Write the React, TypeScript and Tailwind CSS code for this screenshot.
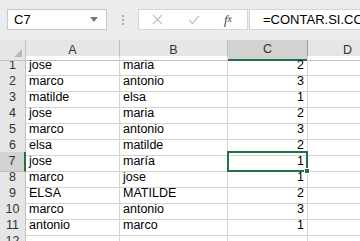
import React from "react";

const rows: [string, string, number][] = [
  ["jose", "maria", 2],
  ["marco", "antonio", 3],
  ["matilde", "elsa", 1],
  ["jose", "maria", 2],
  ["marco", "antonio", 3],
  ["elsa", "matilde", 2],
  ["jose", "maría", 1],
  ["marco", "jose", 1],
  ["ELSA", "MATILDE", 2],
  ["marco", "antonio", 3],
  ["antonio", "marco", 1],
  ["", "", 0],
];

const cols = "grid-cols-[26px_94px_108px_80px_80px]";

export default function App() {
  return (
    <div className="w-[360px] h-[241px] overflow-hidden bg-white text-[12.5px] text-black font-['Liberation_Sans',Arial,sans-serif]">
      {/* formula bar */}
      <div className="h-[40px] bg-[#ececec] flex items-start pt-[9px] pl-[7px]">
        <div className="w-[100px] h-[21px] bg-white border border-[#c8c8c8] flex items-center justify-between pl-[6px] pr-[8px]">
          <span className="text-[13px]">C7</span>
          <svg width="8" height="5" viewBox="0 0 8 5">
            <path d="M0 0 L8 0 L4 5 Z" fill="#777" />
          </svg>
        </div>
        <div className="w-[31px] h-[21px] flex flex-col items-center justify-center gap-[2px]">
          <div className="w-[2px] h-[2px] bg-[#aaa]" />
          <div className="w-[2px] h-[2px] bg-[#aaa]" />
          <div className="w-[2px] h-[2px] bg-[#aaa]" />
        </div>
        <div className="w-[110px] h-[21px] bg-white border border-[#d6d6d6] flex items-center">
          <div className="w-[36px] flex justify-center">
            <svg width="11" height="11" viewBox="0 0 11 11">
              <path d="M1 1 L10 10 M10 1 L1 10" stroke="#c4c4c4" strokeWidth="1.3" />
            </svg>
          </div>
          <div className="w-[38px] flex justify-center">
            <svg width="12" height="10" viewBox="0 0 12 10">
              <path d="M1 5 L4.5 8.5 L11 1" stroke="#c4c4c4" strokeWidth="1.3" fill="none" />
            </svg>
          </div>
          <div className="w-[30px] flex justify-center text-[13px] italic text-[#444] font-['Liberation_Serif',serif]">
            f<span className="text-[10px] relative top-[1px]">x</span>
          </div>
        </div>
        <div className="ml-[1px] flex-1 h-[21px] bg-white border border-[#d6d6d6] border-r-0 flex items-center pl-[13px] text-[13px] whitespace-nowrap overflow-hidden">
          =CONTAR.SI.CONJUNTO(A:A;A7;B:B;B7)
        </div>
      </div>

      {/* column headers */}
      <div className={`grid ${cols} h-[16px] bg-[#e6e6e6] text-[#333]`}>
        <div className="border-r border-b border-[#c0c0c0] relative">
          <svg className="absolute right-[3px] bottom-[3px]" width="8" height="8" viewBox="0 0 8 8">
            <path d="M8 0 L8 8 L0 8 Z" fill="#b8b8b8" />
          </svg>
        </div>
        <div className="border-r border-b border-[#c0c0c0] flex items-center justify-center">A</div>
        <div className="border-r border-b border-[#c0c0c0] flex items-center justify-center">B</div>
        <div className="border-r border-[#9e9e9e] bg-[#d2d2d2] border-b-2 border-b-[#217346] flex items-center justify-center">C</div>
        <div className="border-r border-b border-[#c0c0c0] flex items-center justify-center">D</div>
      </div>

      {rows.map((r, i) => {
        const sel = i === 6;
        return (
          <div key={i} className={`grid ${cols} h-[16px] ${sel ? "relative z-10" : ""}`}>
            <div
              className={
                sel
                  ? "bg-[#d2d2d2] border-b border-[#c0c0c0] border-r-2 border-r-[#217346] flex items-center justify-center text-[#333]"
                  : "bg-[#e6e6e6] border-r border-b border-[#c0c0c0] flex items-center justify-center text-[#333]"
              }
            >
              {i + 1}
            </div>
            <div className="border-r border-b border-[#d4d4d4] flex items-center pl-[3px]">{r[0]}</div>
            <div className="border-r border-b border-[#d4d4d4] flex items-center pl-[3px]">{r[1]}</div>
            <div className="border-r border-b border-[#d4d4d4] flex items-center justify-end pr-[3px] relative">
              {r[2] ? r[2] : ""}
              {sel && (
                <>
                  <div className="absolute -left-[1px] -top-[1px] -right-[1px] -bottom-[1px] border-2 border-[#217346]" />
                  <div className="absolute -right-[3px] -bottom-[3px] w-[6px] h-[6px] bg-[#217346] border border-white" />
                </>
              )}
            </div>
            <div className="border-r border-b border-[#d4d4d4]" />
          </div>
        );
      })}
    </div>
  );
}
